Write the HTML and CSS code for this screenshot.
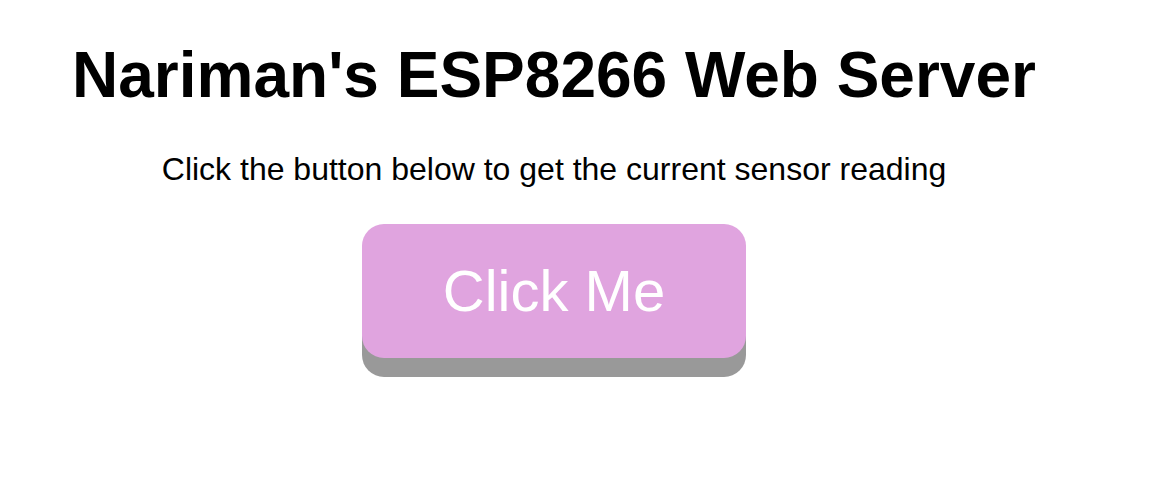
FILE: index.html
```html
<!DOCTYPE html>
<html>
<head>
<meta charset="utf-8">
<title>ESP8266 Web Server</title>
<link rel="stylesheet" href="styles.css">
</head>
<body>
<main class="page">
  <h1 class="title">Nariman's ESP8266 Web Server</h1>
  <p class="lead">Click the button below to get the current sensor reading</p>
  <button class="action" type="button">Click Me</button>
</main>
</body>
</html>
```

FILE: styles.css
```css
html, body {
  margin: 0;
  padding: 0;
  background: #ffffff;
}

.page {
  width: 1108px;
  min-height: 478px;
  box-sizing: border-box;
  padding-bottom: 60px;
  display: flex;
  flex-direction: column;
  align-items: center;
  font-family: "Liberation Sans", Arial, Helvetica, sans-serif;
  color: #000000;
}

.title {
  margin: 38px 0 0;
  font-size: 64px;
  font-weight: bold;
  line-height: normal;
}

.lead {
  margin: 39px 0 0;
  font-size: 32px;
  line-height: normal;
}

.action {
  margin-top: 36px;
  width: 384px;
  height: 134px;
  padding: 0 0 2px;
  border: none;
  border-radius: 22px;
  background: #e0a4df;
  color: #ffffff;
  font-family: "Liberation Sans", Arial, Helvetica, sans-serif;
  font-size: 58px;
  box-shadow: 0 19px 0 #999999;
  cursor: pointer;
}
```
